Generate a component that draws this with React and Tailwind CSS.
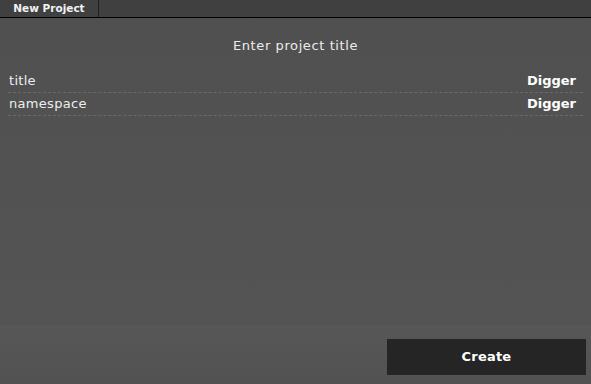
export default function App() {
  const rows = [
    { k: "title", v: "Digger" },
    { k: "namespace", v: "Digger" },
  ];
  return (
    <div
      className="w-[591px] h-[384px] flex flex-col bg-[#535353] text-[#eeeeee] overflow-hidden"
      style={{ fontFamily: '"DejaVu Sans", Verdana, sans-serif' }}
    >
      <div className="h-[18px] flex bg-[#404040] border-b border-black shrink-0">
        <div className="w-[99px] border-r border-[#1e1e1e] flex items-center justify-center text-[10.5px] font-bold text-[#f2f2f2] leading-none pb-[1px]">
          New Project
        </div>
      </div>
      <div className="flex-1 flex flex-col bg-gradient-to-b from-[#505050] to-[#545454]">
        <div className="text-center text-[13px] tracking-[0.6px] mt-[20px] leading-[16px] text-[#ececec]">
          Enter project title
        </div>
        <div className="mt-[16px] px-[8px]">
          {rows.map((r) => (
            <div
              key={r.k}
              className="flex justify-between items-end h-[23px] pb-[3px] border-b border-dashed border-[#6a6a6a] px-[1px]"
            >
              <span className="text-[13px] tracking-[0.3px] leading-[16px]">{r.k}</span>
              <span className="text-[13px] font-bold tracking-[0px] leading-[16px] pr-[6px] text-white">
                {r.v}
              </span>
            </div>
          ))}
        </div>
      </div>
      <div className="h-[59px] shrink-0 bg-gradient-to-b from-[#575757] to-[#525252] flex justify-end items-start pt-[14px] pr-[5px]">
        <button className="w-[199px] h-[36px] bg-[#252525] text-[13px] font-bold tracking-[0.2px] text-white">
          Create
        </button>
      </div>
    </div>
  );
}
